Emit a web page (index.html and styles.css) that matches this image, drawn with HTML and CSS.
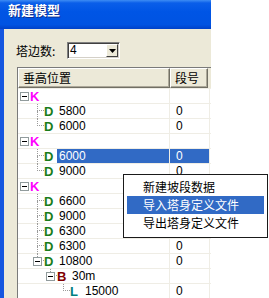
FILE: index.html
```html
<!DOCTYPE html>
<html lang="zh-CN">
<head>
    <meta charset="UTF-8">
    <title>新建模型</title>
    <link rel="stylesheet" href="styles.css">
</head>
<body>
    <div class="window">
        <div class="titlebar">新建模型</div>
        <div class="client">
            <div class="field">
                <span class="label">塔边数:</span>
                <div class="combo">
                    <span class="combo-value">4</span>
                    <span class="combo-btn">
                        <svg width="7" height="4" viewBox="0 0 7 4"><path d="M0 0h7L3.5 4z" fill="#000"/></svg>
                    </span>
                </div>
            </div>

            <div class="listview">
                <div class="lv-header">
                    <div class="hd hd-name">垂高位置</div>
                    <div class="hd hd-num">段号</div>
                    <div class="hd-fill"></div>
                </div>
                <div class="lv-body">
                    <div class="row">
                        <div class="cell-name lv0"><span class="slot"><span class="box"></span></span><span class="ico k">K</span><span class="text"></span></div>
                        <div class="cell-num"></div>
                    </div>
                    <div class="row">
                        <div class="cell-name lv1"><span class="slot"><span class="up"></span><span class="down"></span></span><span class="ico d">D</span><span class="text">5800</span></div>
                        <div class="cell-num">0</div>
                    </div>
                    <div class="row">
                        <div class="cell-name lv1"><span class="slot"><span class="up"></span></span><span class="ico d">D</span><span class="text">6000</span></div>
                        <div class="cell-num">0</div>
                    </div>
                    <div class="row">
                        <div class="cell-name lv0"><span class="slot"><span class="box"></span></span><span class="ico k">K</span><span class="text"></span></div>
                        <div class="cell-num"></div>
                    </div>
                    <div class="row sel">
                        <div class="cell-name lv1"><span class="slot"><span class="up"></span><span class="down"></span></span><span class="ico d">D</span><span class="text">6000</span></div>
                        <div class="cell-num">0</div>
                    </div>
                    <div class="row">
                        <div class="cell-name lv1"><span class="slot"><span class="up"></span></span><span class="ico d">D</span><span class="text">9000</span></div>
                        <div class="cell-num">0</div>
                    </div>
                    <div class="row">
                        <div class="cell-name lv0"><span class="slot"><span class="box"></span></span><span class="ico k">K</span><span class="text"></span></div>
                        <div class="cell-num"></div>
                    </div>
                    <!-- the next three rows have their 段号 hidden under the menu -->
                    <div class="row">
                        <div class="cell-name lv1"><span class="slot"><span class="up"></span><span class="down"></span></span><span class="ico d">D</span><span class="text">6600</span></div>
                        <div class="cell-num"></div>
                    </div>
                    <div class="row">
                        <div class="cell-name lv1"><span class="slot"><span class="up"></span><span class="down"></span></span><span class="ico d">D</span><span class="text">9000</span></div>
                        <div class="cell-num"></div>
                    </div>
                    <div class="row">
                        <div class="cell-name lv1"><span class="slot"><span class="up"></span><span class="down"></span></span><span class="ico d">D</span><span class="text">6300</span></div>
                        <div class="cell-num"></div>
                    </div>
                    <div class="row">
                        <div class="cell-name lv1"><span class="slot"><span class="up"></span><span class="down"></span></span><span class="ico d">D</span><span class="text">6300</span></div>
                        <div class="cell-num">0</div>
                    </div>
                    <div class="row">
                        <div class="cell-name lv1"><span class="slot"><span class="up"></span><span class="box"></span></span><span class="ico d">D</span><span class="text">10800</span></div>
                        <div class="cell-num">0</div>
                    </div>
                    <div class="row">
                        <div class="cell-name lv2"><span class="slot"><span class="up"></span><span class="box"></span></span><span class="ico b">B</span><span class="text">30m</span></div>
                        <div class="cell-num"></div>
                    </div>
                    <div class="row">
                        <div class="cell-name lv3"><span class="slot"><span class="up"></span></span><span class="ico l">L</span><span class="text">15000</span></div>
                        <div class="cell-num">0</div>
                    </div>
                </div>
            </div>
        </div>
    </div>

    <!-- context menu over the list -->
    <div class="menu">
        <div class="menu-item">新建坡段数据</div>
        <div class="menu-item active">导入塔身定义文件</div>
        <div class="menu-item">导出塔身定义文件</div>
    </div>
</body>
</html>
```

FILE: styles.css
```css
* {
    box-sizing: border-box;
}

body {
    margin: 0;
    width: 269px;
    height: 298px;
    overflow: hidden;
    position: relative;
    background: #fff;
    color: #000;
    font-family: "Liberation Sans", "Noto Sans CJK SC", sans-serif;
    font-size: 12px;
}

.window {
    width: 211px;
    height: 298px;
    overflow: hidden;
    display: flex;
    flex-direction: column;
}

.titlebar {
    flex: none;
    height: 29px;
    line-height: 29px;
    padding-left: 8px;
    color: #fff;
    font: bold 13px "Noto Sans CJK SC", sans-serif;
    text-shadow: 1px 1px #0f2f8f;
    background: linear-gradient(#3d8cf4 0, #0a5ee9 3px, #0055e5 40%, #0053e2 85%, #0041c8 100%);
}

.client {
    flex: 1;
    background: #ece9d8;
    border-left: 4px solid #1556e0;
    padding: 13px 0 0 12px;
}

/* 塔边数 row */
.field {
    display: flex;
    align-items: center;
    height: 17px;
}

.label {
    flex: none;
    width: 51px;
    font-family: "Noto Sans CJK SC", sans-serif;
}

.combo {
    display: flex;
    align-items: center;
    width: 53px;
    height: 17px;
    background: #fff;
    border: 1px solid;
    border-color: #808080 #fff #fff #808080;
    box-shadow: inset 1px 1px #404040, inset -1px -1px #d4d0c8;
}

.combo-value {
    flex: 1;
    padding-left: 2px;
    line-height: 15px;
}

.combo-btn {
    display: flex;
    align-items: center;
    justify-content: center;
    width: 12px;
    height: 13px;
    margin-right: 1px;
    background: #ece9d8;
    border: 1px solid;
    border-color: #fff #404040 #404040 #fff;
}

/* list view */
.listview {
    margin: 8px 0 0 1px;
    width: 200px;
    height: 240px;
    background: #fff;
    border-left: 1px solid #7a7a7a;
    border-top: 1px solid #7a7a7a;
}

.lv-header {
    display: flex;
    height: 20px;
    background: #ece9d8;
    font-family: "Noto Sans CJK SC", sans-serif;
}

.hd {
    flex: none;
    line-height: 17px;
    border: 1px solid;
    border-color: #fff #716f64 #716f64 #fff;
    box-shadow: inset -1px -1px #aca899;
}

.hd-name {
    width: 152px;
    padding-left: 4px;
}

.hd-num {
    width: 38px;
    padding-left: 4px;
}

.hd-fill {
    flex: 1;
}

.lv-body {
    border-top: 1px solid #efede5;
}

.row {
    display: flex;
    height: 15px;
    border-bottom: 1px solid #efede5;
    line-height: 14px;
}

.cell-name {
    display: flex;
    width: 152px;
    flex: none;
    border-right: 1px solid #efede5;
}

.lv0 { padding-left: 2px; }
.lv1 { padding-left: 15px; }
.lv2 { padding-left: 28px; }
.lv3 { padding-left: 41px; }

.slot {
    flex: none;
    display: grid;
    grid-template-columns: 11px;
    grid-template-rows: 7px 7px;
    width: 11px;
    height: 14px;
}

.lv0 .slot {
    width: 10px;
}

.up {
    grid-area: 1 / 1;
    margin-left: 4px;
    border-left: 1px dotted #9a9a9a;
    border-bottom: 1px dotted #9a9a9a;
}

.down {
    grid-area: 2 / 1;
    align-self: start;
    height: 8px;
    margin-left: 4px;
    border-left: 1px dotted #9a9a9a;
}

.box {
    grid-area: 1 / 1 / 3 / 2;
    align-self: center;
    display: flex;
    align-items: center;
    justify-content: center;
    width: 9px;
    height: 9px;
    background: #fff;
    border: 1px solid #919b9c;
}

.box::after {
    content: "";
    width: 5px;
    height: 1px;
    background: #000;
}

.ico {
    flex: none;
    width: 13px;
    font-weight: bold;
    font-size: 13px;
    line-height: 15px;
}

.k { color: #ff00ff; }
.d { color: #1a7d1a; }
.b { color: #800000; }
.l { color: #008080; }

.text {
    flex: 1;
    padding: 0 2px;
}

.cell-num {
    flex: none;
    width: 40px;
    padding-left: 6px;
    border-right: 1px solid #efede5;
}

.row.sel .text,
.row.sel .cell-num {
    background: #316ac5;
    color: #fff;
}

/* popup menu */
.menu {
    position: absolute;
    left: 123px;
    top: 174px;
    width: 145px;
    height: 64px;
    padding: 3px;
    background: #fff;
    border: 1px solid #1a1a1a;
    font-family: "Noto Sans CJK SC", sans-serif;
}

.menu-item {
    height: 18px;
    line-height: 18px;
    padding-left: 16px;
}

.menu-item.active {
    background: #316ac5;
    color: #fff;
}
```
